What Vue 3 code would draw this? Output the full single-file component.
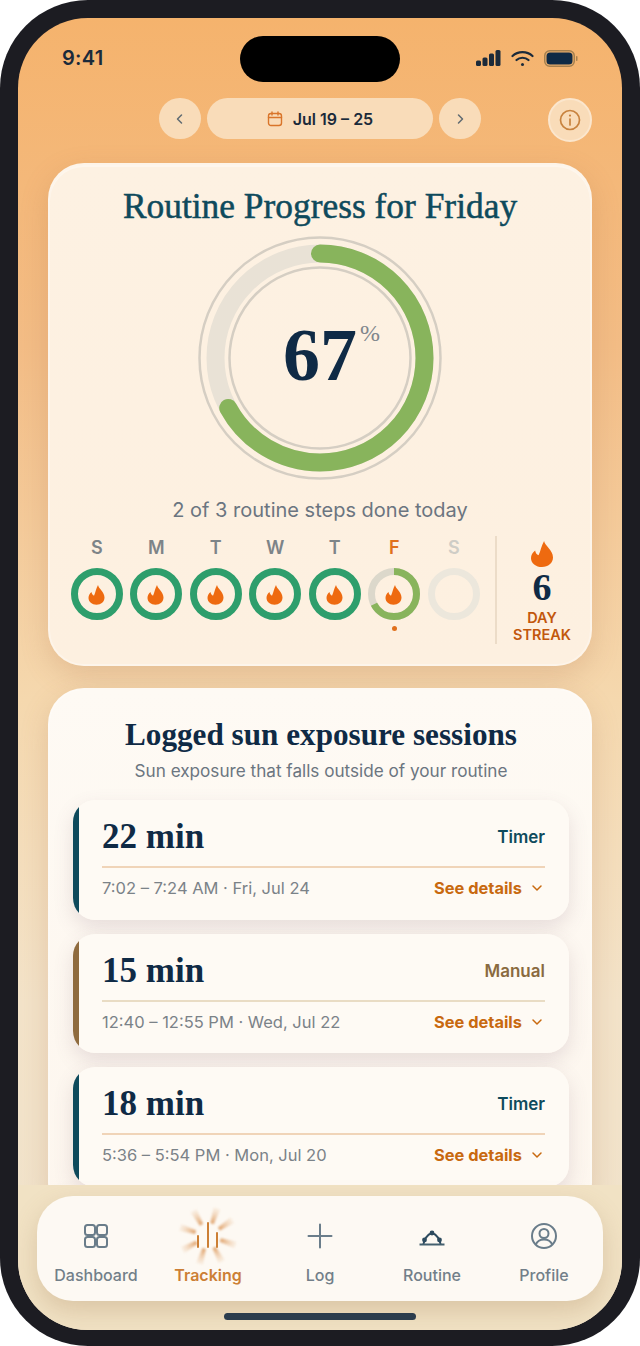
<template>
  <div class="phone">
    <div class="screen">
      <div class="island"></div>

      <!-- status bar -->
      <div class="status">
        <span class="clock">9:41</span>
        <div class="status-icons">
          <svg width="25" height="16" viewBox="0 0 25 16">
            <rect x="0" y="10.500" width="5" height="5.500" rx="1.500" fill="#1b2a3a" />
            <rect x="6.500" y="7.500" width="5" height="8.500" rx="1.500" fill="#1b2a3a" />
            <rect x="13" y="3.500" width="5" height="12.500" rx="1.500" fill="#1b2a3a" />
            <rect x="19.500" y="0" width="5" height="16" rx="1.500" fill="#1b2a3a" />
          </svg>
          <svg width="23" height="17" viewBox="0 0 23 17" fill="none" stroke="#1b2a3a" stroke-width="2.200" stroke-linecap="round">
            <path d="M1.500 6 C7 0.800 16 0.800 21.500 6" />
            <path d="M5.500 10 C8.800 7 14.200 7 17.500 10" />
            <circle cx="11.500" cy="14.500" r="1.500" fill="#1b2a3a" stroke="none" />
          </svg>
          <svg width="35" height="17" viewBox="0 0 35 17">
            <rect x="0.750" y="0.750" width="29.500" height="15.500" rx="5" fill="none" stroke="#a5804f" stroke-width="1.500" />
            <rect x="2.500" y="2.500" width="26" height="12" rx="3.500" fill="#0f2a45" />
            <rect x="32" y="6" width="1.500" height="5" rx="0.700" fill="#a5804f" />
          </svg>
        </div>
      </div>

      <!-- week picker -->
      <div class="date-row">
        <div></div>
        <div class="date-nav">
          <button class="nav-btn">
            <svg width="12" height="14" viewBox="0 0 12 14" fill="none" stroke="#5e6a72" stroke-width="1.500" stroke-linecap="round" stroke-linejoin="round"><path d="M7.500 3 3.500 7 7.500 11" /></svg>
          </button>
          <div class="date-pill">
            <svg width="16" height="16" viewBox="0 0 16 16" fill="none" stroke="#d9752a" stroke-width="1.400" stroke-linecap="round">
              <rect x="1.500" y="2.500" width="13" height="12" rx="2.500" />
              <path d="M1.500 6.500h13M5 1v3M11 1v3" />
            </svg>
            <span>Jul 19 – 25</span>
          </div>
          <button class="nav-btn">
            <svg width="12" height="14" viewBox="0 0 12 14" fill="none" stroke="#5e6a72" stroke-width="1.500" stroke-linecap="round" stroke-linejoin="round"><path d="M4.500 3 8.500 7 4.500 11" /></svg>
          </button>
        </div>
        <button class="info-btn">
          <svg width="22" height="22" viewBox="0 0 22 22" fill="none" stroke="#c8833f" stroke-width="1.700" stroke-linecap="round">
            <circle cx="11" cy="11" r="9.500" />
            <path d="M11 10v6" />
            <circle cx="11" cy="6.600" r="1.100" fill="#c8833f" stroke="none" />
          </svg>
        </button>
      </div>

      <!-- progress card -->
      <section class="card progress-card">
        <h1 class="progress-title">Routine Progress for Friday</h1>
        <div class="ring-wrap">
          <svg width="244" height="244" viewBox="0 0 244 244" fill="none">
            <circle cx="122" cy="122" r="120.500" stroke="#d5cec3" stroke-width="2.500" />
            <circle cx="122" cy="122" r="90.500" stroke="#d5cec3" stroke-width="2.500" />
            <circle cx="122" cy="122" r="104.500" stroke="#e9e2d6" stroke-width="18" />
            <circle
              cx="122" cy="122" r="104.500" stroke="#88b45c" stroke-width="18" stroke-linecap="round"
              :stroke-dasharray="`${mainArc} 1000`" transform="rotate(-90 122 122)"
            />
          </svg>
          <div class="ring-value">
            <span class="ring-num">67</span><span class="ring-unit">%</span>
          </div>
        </div>
        <p class="progress-caption">2 of 3 routine steps done today</p>

        <div class="week-row">
          <div class="week">
            <div v-for="(d, i) in days" :key="i" class="day">
              <span class="day-label" :class="d.state">{{ d.label }}</span>
              <div class="day-ring">
                <svg width="52" height="52" viewBox="0 0 52 52" fill="none">
                  <circle v-if="d.state === 'done'" cx="26" cy="26" r="22.500" stroke="#2e9e6c" stroke-width="7" />
                  <template v-else-if="d.state === 'today'">
                    <circle cx="26" cy="26" r="22.500" stroke="#dcd8cb" stroke-width="7" />
                    <circle
                      cx="26" cy="26" r="22.500" stroke="#88b45c" stroke-width="7"
                      :stroke-dasharray="`${todayArc} 1000`" transform="rotate(-90 26 26)"
                    />
                  </template>
                  <circle v-else cx="26" cy="26" r="22.500" stroke="#ece7dc" stroke-width="7" />
                  <path
                    v-if="d.state !== 'future'"
                    :d="FLAME" fill="#ee6a10" transform="translate(14 16) scale(1 0.9)"
                  />
                </svg>
              </div>
              <span v-if="d.state === 'today'" class="today-dot"></span>
            </div>
          </div>
          <div class="streak">
            <svg width="22" height="26" viewBox="3.500 1 16 22" preserveAspectRatio="none"><path :d="FLAME" fill="#ee6a10" /></svg>
            <span class="streak-num">6</span>
            <span class="streak-label">DAY<br />STREAK</span>
          </div>
        </div>
      </section>

      <!-- sessions card -->
      <section class="card sessions-card">
        <h2 class="sessions-title">Logged sun exposure sessions</h2>
        <p class="sessions-sub">Sun exposure that falls outside of your routine</p>
        <div class="session-list">
          <article v-for="s in sessions" :key="s.when" class="session" :class="s.kind.toLowerCase()">
            <div class="session-top">
              <span class="session-min">{{ s.mins }} min</span>
              <span class="session-kind">{{ s.kind }}</span>
            </div>
            <div class="session-bottom">
              <span class="session-when">{{ s.when }}</span>
              <span class="session-more">
                See details
                <svg width="12" height="8" viewBox="0 0 12 8" fill="none" stroke="#c8690f" stroke-width="1.500" stroke-linecap="round" stroke-linejoin="round"><path d="M2 2 6 6l4-4" /></svg>
              </span>
            </div>
          </article>
        </div>
      </section>

      <!-- bottom nav -->
      <div class="dock">
        <nav class="tabs">
          <div class="tab">
            <svg width="26" height="26" viewBox="0 0 26 26" fill="none" stroke="#6a7d8a" stroke-width="2">
              <rect x="2" y="2" width="10" height="10" rx="2.500" />
              <rect x="14" y="2" width="10" height="10" rx="2.500" />
              <rect x="2" y="14" width="10" height="10" rx="2.500" />
              <rect x="14" y="14" width="10" height="10" rx="2.500" />
            </svg>
            <span>Dashboard</span>
          </div>
          <div class="tab active">
            <svg class="tracking-icon" width="64" height="64" viewBox="-32 -32 64 64" fill="none">
              <defs>
                <linearGradient id="ray" gradientUnits="userSpaceOnUse" x1="0" y1="-29" x2="0" y2="-12">
                  <stop offset="0" stop-color="#efc9a4" stop-opacity="0.2" />
                  <stop offset="1" stop-color="#dc9a5f" />
                </linearGradient>
              </defs>
              <g filter="blur(1px)">
                <path
                  v-for="a in rayAngles" :key="a"
                  d="M-1.800 -13 L1.800 -13 L3.400 -29 L-3.400 -29 Z" fill="url(#ray)" :transform="`rotate(${a})`"
                />
              </g>
              <path d="M-10 0v11M0 -13v24M9 -3v14" stroke="#cc7f35" stroke-width="2" stroke-linecap="round" />
            </svg>
            <span>Tracking</span>
          </div>
          <div class="tab">
            <svg width="26" height="26" viewBox="0 0 26 26" fill="none" stroke="#6a7d8a" stroke-width="2" stroke-linecap="round">
              <path d="M13 1.500v23M1.500 13h23" />
            </svg>
            <span>Log</span>
          </div>
          <div class="tab">
            <svg width="26" height="26" viewBox="0 0 26 26" fill="none" stroke="#2d4b5f" stroke-width="2">
              <path d="M4.500 21 C4.800 17 8 11.500 13 10 C18 11.500 21.200 17 21.500 21" />
              <path d="M0.500 21.500h25" stroke="#44606f" />
              <circle cx="13" cy="10" r="2.400" fill="#2d4b5f" stroke="none" />
              <circle cx="5.500" cy="17" r="2.400" fill="#2d4b5f" stroke="none" />
              <circle cx="20.500" cy="17" r="2.400" fill="#2d4b5f" stroke="none" />
            </svg>
            <span>Routine</span>
          </div>
          <div class="tab">
            <svg width="26" height="26" viewBox="0 0 26 26" fill="none" stroke="#6a7d8a" stroke-width="2">
              <circle cx="13" cy="13" r="12" />
              <circle cx="13" cy="10.500" r="4.500" />
              <path d="M4.800 21.500c1.500-3.600 4.500-5 8.200-5s6.700 1.400 8.200 5" />
            </svg>
            <span>Profile</span>
          </div>
        </nav>
        <div class="home-bar"></div>
      </div>
    </div>
  </div>
</template>

<script setup>
const FLAME = 'M13 1C13.500 5 19.500 8.500 19.500 15C19.500 19.700 16 23 11.500 23C7 23 3.500 19.700 3.500 15.500C3.500 13 4.500 11 6.500 9C6.800 11 7.500 12.200 9 13C10.500 9.500 11 5 13 1Z'

const mainArc = 2 * Math.PI * 104.5 * 0.67
const todayArc = 2 * Math.PI * 22.5 * 0.67

const rayAngles = [-30, 18, 57, 108, 152, 197, 241, 287]

const days = [
  { label: 'S', state: 'done' },
  { label: 'M', state: 'done' },
  { label: 'T', state: 'done' },
  { label: 'W', state: 'done' },
  { label: 'T', state: 'done' },
  { label: 'F', state: 'today' },
  { label: 'S', state: 'future' },
]

const sessions = [
  { mins: 22, kind: 'Timer', when: '7:02 – 7:24 AM · Fri, Jul 24' },
  { mins: 15, kind: 'Manual', when: '12:40 – 12:55 PM · Wed, Jul 22' },
  { mins: 18, kind: 'Timer', when: '5:36 – 5:54 PM · Mon, Jul 20' },
]
</script>

<style>
html, body {
  margin: 0;
  background: #fff;
}
</style>

<style scoped>
* {
  box-sizing: border-box;
}

.phone {
  width: 640px;
  height: 1346px;
  padding: 18px 18px 16px;
  background: #1c1c22;
  border-radius: 88px;
  overflow: hidden;
  font-family: Inter, "Noto Sans", sans-serif;
}

.screen {
  position: relative;
  height: 1312px;
  border-radius: 70px;
  overflow: hidden;
  background: linear-gradient(180deg, #f5b36d 0%, #f3bd86 25%, #f5d8ae 52%, #f3e3c9 75%, #f0e3cc 100%);
}

.island {
  position: absolute;
  top: 18px;
  left: 222px;
  width: 160px;
  height: 46px;
  border-radius: 23px;
  background: #000;
}

/* status bar */
.status {
  height: 80px;
  padding: 28px 44px 0;
  display: flex;
  justify-content: space-between;
}

.clock {
  font-size: 20px;
  line-height: 24px;
  font-weight: 600;
  color: #1b2a3a;
  letter-spacing: 0.3px;
}

.status-icons {
  display: flex;
  gap: 10px;
  height: 24px;
  align-items: center;
  margin-right: -1px;
}

/* date row */
.date-row {
  height: 44px;
  margin: 0 30px;
  display: grid;
  grid-template-columns: 1fr auto 1fr;
}

.date-nav {
  display: flex;
  gap: 6px;
}

.nav-btn,
.date-pill {
  height: 41px;
  border: none;
  border-radius: 21px;
  background: #f9dcb9;
  display: flex;
  align-items: center;
  justify-content: center;
}

.nav-btn {
  width: 42px;
  padding: 0;
}

.date-pill {
  width: 226px;
  gap: 10px;
  font-size: 16px;
  font-weight: 600;
  color: #1b2a3a;
}

.info-btn {
  justify-self: end;
  width: 44px;
  height: 44px;
  padding: 0;
  border: 2px solid #fbe6cd;
  border-radius: 50%;
  background: #f9dcb9;
  display: flex;
  align-items: center;
  justify-content: center;
}

/* cards */
.card {
  margin: 0 30px;
  border: 2px solid rgba(255, 255, 255, 0.3);
  border-radius: 36px;
}

.progress-card {
  height: 503px;
  margin-top: 21px;
  padding: 21px 3px 0 17px;
  background: linear-gradient(180deg, #fdf1e2 0%, #fdf0e0 100%);
  box-shadow: 0 10px 28px rgba(170, 105, 70, 0.22), inset 0 2px 0 rgba(255, 255, 255, 0.4);
}

.progress-title {
  margin: 0 0 0 -14px;
  font-family: "Liberation Serif", serif;
  font-size: 35.400px;
  line-height: 40px;
  font-weight: 400;
  text-align: center;
  color: #0e4a5c;
  -webkit-text-stroke: 0.5px #0e4a5c;
}

.ring-wrap {
  position: relative;
  width: 244px;
  height: 244px;
  margin: 10px auto 0;
  left: -7px;
}

.ring-value {
  position: absolute;
  inset: 0 0 6px;
  display: flex;
  align-items: center;
  justify-content: center;
}

.ring-num {
  font-family: "Liberation Serif", serif;
  font-size: 74px;
  line-height: 74px;
  font-weight: 700;
  color: #0f2a45;
}

.ring-unit {
  position: absolute;
  top: 85px;
  left: 162px;
  font-family: "Liberation Serif", serif;
  font-size: 24px;
  line-height: 24px;
  color: #80868c;
}

.progress-caption {
  margin: 18px 0 14px -14px;
  font-size: 20px;
  line-height: 24px;
  text-align: center;
  color: #6b7580;
}

.week-row {
  display: flex;
  height: 108px;
}

.week {
  display: grid;
  grid-template-columns: repeat(7, 59.500px);
  width: 430px;
  border-right: 2px solid #ecdcc8;
  padding-right: 12.500px;
}

.day {
  display: flex;
  flex-direction: column;
  align-items: center;
}

.day-label {
  font-size: 18px;
  line-height: 24px;
  font-weight: 600;
  color: #7d8488;
}

.day-label.today {
  color: #e0701c;
}

.day-label.future {
  color: #cfcdc6;
}

.day-ring {
  margin-top: 8px;
  height: 52px;
}

.day-ring svg {
  display: block;
}

.today-dot {
  width: 5px;
  height: 5px;
  margin-top: 5.500px;
  border-radius: 50%;
  background: #e0701c;
}

.streak {
  width: 90px;
  display: flex;
  flex-direction: column;
  align-items: center;
  padding-top: 5px;
}

.streak svg {
  display: block;
}

.streak-num {
  font-family: "Liberation Serif", serif;
  font-size: 38px;
  line-height: 40px;
  font-weight: 700;
  color: #0f2a45;
}

.streak-label {
  margin-top: 2px;
  font-size: 14.500px;
  line-height: 17px;
  font-weight: 600;
  text-align: center;
  color: #c2570c;
}

.sessions-card {
  margin-top: 22px;
  padding: 26px 21px 30px 23px;
  background: linear-gradient(180deg, #fefaf4 0%, #fdf6ee 100%);
  box-shadow: 0 10px 28px rgba(170, 105, 70, 0.22);
}

.sessions-title {
  margin: 0;
  font-family: "Liberation Serif", serif;
  font-size: 31.200px;
  line-height: 38px;
  font-weight: 700;
  text-align: center;
  color: #0f2a45;
}

.sessions-sub {
  margin: 6px 0 18px;
  font-size: 17.150px;
  line-height: 22px;
  text-align: center;
  color: #6b7580;
}

.session-list {
  display: flex;
  flex-direction: column;
  gap: 14px;
}

.session {
  --accent: #0e4a5c;
  height: 120px;
  padding: 17px 24px 0 29px;
  border-radius: 22px;
  background: linear-gradient(90deg, var(--accent) 6px, #fefaf4 6px);
  box-shadow: 0 8px 20px rgba(110, 80, 100, 0.16);
}

.session.manual {
  --accent: #8f6b3e;
  height: 119px;
}

.session-top {
  display: flex;
  justify-content: space-between;
  align-items: center;
  height: 40px;
  padding-bottom: 9px;
  box-sizing: content-box;
  border-bottom: 2px solid #f0d4b8;
}

.manual .session-top {
  border-bottom-color: #e9dcc4;
}

.session-min {
  font-family: "Liberation Serif", serif;
  font-size: 35px;
  line-height: 40px;
  font-weight: 700;
  color: #0f2a45;
}

.session-kind {
  font-size: 17px;
  font-weight: 600;
  color: #0e4a5c;
}

.manual .session-kind {
  color: #8a6a3f;
}

.session-bottom {
  display: flex;
  justify-content: space-between;
  align-items: center;
  height: 22px;
  margin-top: 9px;
}

.session-when {
  font-size: 16.500px;
  color: #7b8288;
}

.session-more {
  display: flex;
  align-items: center;
  gap: 9px;
  margin-right: 2px;
  font-size: 16.400px;
  font-weight: 700;
  color: #c8690f;
}

.dock {
  position: absolute;
  left: 0;
  right: 0;
  bottom: 0;
  height: 145px;
  padding: 11px 19px 0;
  background: #f1e2c4;
}

.tabs {
  height: 105px;
  display: grid;
  grid-template-columns: repeat(5, 112px);
  justify-content: center;
  border-radius: 36px;
  background: #fdf9f3;
  box-shadow: 0 10px 24px rgba(150, 110, 70, 0.25);
}

.tab {
  position: relative;
  display: flex;
  flex-direction: column;
  align-items: center;
  padding-top: 27px;
  font-size: 16px;
  font-weight: 500;
  color: #727f89;
}

.tab span {
  margin-top: 14px;
  line-height: 24px;
}

.tab.active {
  color: #cc7f35;
  font-weight: 600;
}

.tracking-icon {
  margin: -19px 0;
}

.home-bar {
  width: 192px;
  height: 7px;
  margin: 12px auto 0;
  border-radius: 4px;
  background: #2b3c4d;
}
</style>
